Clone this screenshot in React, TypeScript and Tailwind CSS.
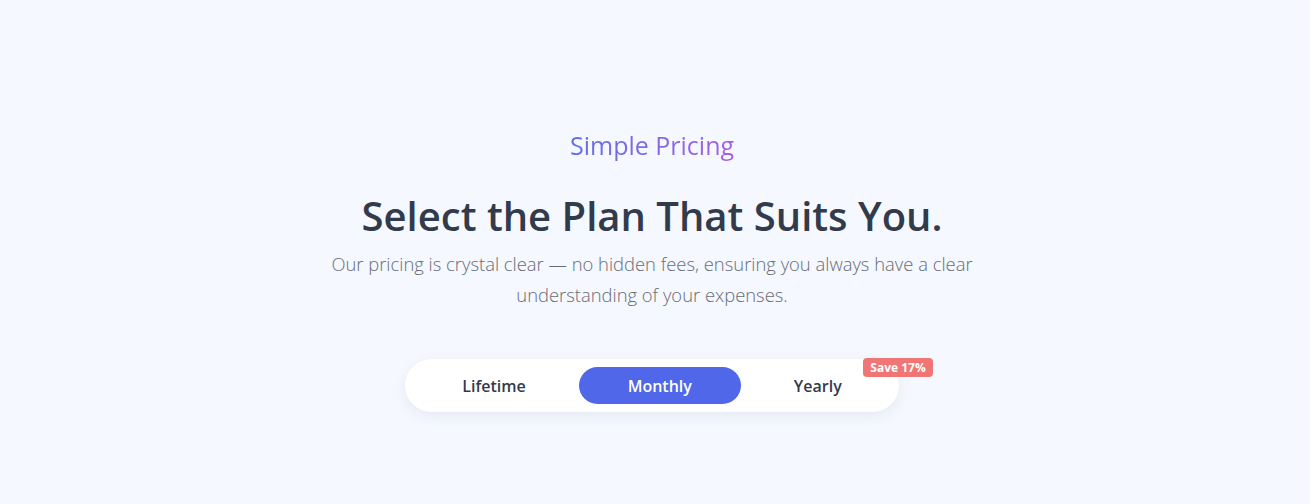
import React from "react";

export default function App() {
  return (
    <div
      className="min-h-[504px] w-full bg-[#f5f8fe] flex flex-col items-center pt-[129px] pr-[6px]"
      style={{ fontFamily: '"Open Sans", "Liberation Sans", sans-serif' }}
    >
      <p className="text-[25px] leading-[32px] font-normal bg-gradient-to-r from-[#5f6ee6] to-[#a35fe6] bg-clip-text text-transparent">
        Simple Pricing
      </p>
      <h1 className="mt-[31px] text-[40px] leading-[48px] font-semibold text-[#323b4b]">
        Select the Plan That Suits You.
      </h1>
      <p className="mt-[8px] max-w-[680px] text-center text-[18.4px] leading-[31px] font-light text-[#676d78]">
        Our pricing is crystal clear — no hidden fees, ensuring you always have a clear understanding of your expenses.
      </p>
      <div className="mt-[49px] relative flex items-center gap-[4px] rounded-full bg-white p-[8px] shadow-[0_4px_14px_rgba(30,41,80,0.07)]">
        <button className="h-[37px] rounded-full px-[49px] text-[16px] font-semibold text-[#323b4b]">
          Lifetime
        </button>
        <button className="h-[37px] rounded-full px-[49px] text-[16px] font-semibold text-white bg-[#4f67e8]">
          Monthly
        </button>
        <button className="h-[37px] rounded-full px-[49px] text-[16px] font-semibold text-[#323b4b]">
          Yearly
        </button>
        <span className="absolute right-[-34px] top-[-1px] rounded-[4px] bg-[#f07575] px-[7px] text-[12px] leading-[19px] font-bold text-white">
          Save 17%
        </span>
      </div>
    </div>
  );
}
